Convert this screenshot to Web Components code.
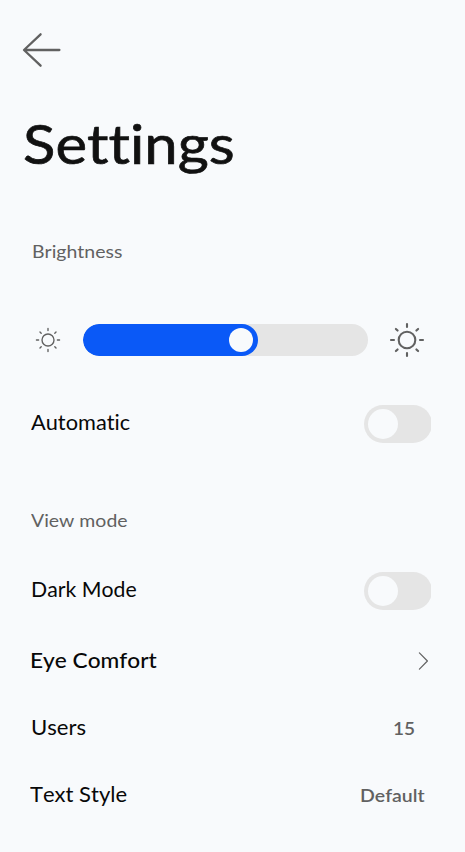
<!DOCTYPE html>
<html lang="en">
<head>
<meta charset="utf-8">
<title>Settings</title>
<style>
html,body{margin:0;background:#f8fafc}
</style>
</head>
<body>
<settings-page></settings-page>
<script>
const define = (name, html, setup) => {
  const t = document.createElement('template');
  t.innerHTML = html;
  customElements.define(name, class extends HTMLElement {
    connectedCallback() {
      if (this.shadowRoot) return;
      this.attachShadow({mode: 'open'}).append(t.content.cloneNode(true));
      if (setup) setup.call(this, this.shadowRoot);
    }
  });
};

// A label whose glyphs are widened to span the given width.
define('fit-label', `<style>
:host{display:block;white-space:nowrap;font-kerning:none;font-variant-ligatures:none}
span{display:block;width:max-content;transform-origin:0 50%}
</style><span><slot></slot></span>`, function () {
  const text = this.textContent, cs = getComputedStyle(this);
  const c = document.createElement('canvas').getContext('2d');
  c.font = `${cs.fontWeight} ${cs.fontSize} ${cs.fontFamily}`;
  c.fontKerning = 'none';
  const m = c.measureText(text);
  const ink = m.actualBoundingBoxRight + m.actualBoundingBoxLeft;
  const w = +this.getAttribute('span');
  const k = w / ink;
  const s = this.shadowRoot.querySelector('span');
  s.style.transform = `scaleX(${k})`;
  s.style.marginLeft = m.actualBoundingBoxLeft * k + 'px';
  this.style.width = w + 'px';
});

define('back-button', `<style>:host{display:block;height:36px}svg{display:block}</style>
<svg width="40" height="36" viewBox="0 0 40 36" fill="none" stroke="#616161" stroke-width="2.3" stroke-linecap="round" stroke-linejoin="round"><path d="M18.6 2.3 2 18 18.6 33.7M2.3 18H37.4"/></svg>`);

define('sun-icon', `<style>:host{display:block;flex:none;width:var(--size);height:var(--size)}svg{display:block}</style>
<svg width="100%" height="100%" viewBox="0 0 36 36" fill="none" stroke="#616161" stroke-linecap="round"><circle cx="18" cy="18" r="8.3"/><path d="M18 2v3M18 31v3M2 18h3M31 18h3M6.9 6.9l1.7 1.7M27.4 27.4l1.7 1.7M6.9 29.1l1.7-1.7M27.4 8.6l1.7-1.7"/></svg>`, function (r) {
  r.querySelector('svg').setAttribute('stroke-width', this.getAttribute('stroke') || '2.1');
});

define('range-slider', `<style>
:host{display:block;width:285px;height:32px;border-radius:16px;background:#e5e5e5;overflow:hidden}
.fill{box-sizing:border-box;width:175px;height:32px;border-radius:16px;background:#0a59f7;display:flex;align-items:center;justify-content:flex-end;padding-right:5px}
i{display:block;width:24px;height:24px;border-radius:50%;background:#f8fafc}
</style><div class="fill"><i></i></div>`);

define('toggle-switch', `<style>
:host{display:block;flex:none;width:67px;height:38px;overflow:hidden}
div{box-sizing:border-box;width:68px;height:38px;border-radius:19px;background:#e5e5e5;padding:4px}
i{display:block;width:30px;height:30px;border-radius:50%;background:#f8fafc}
</style><div><i></i></div>`);

define('chevron-icon', `<style>:host{display:block;width:12px;height:20px}svg{display:block}</style>
<svg width="12" height="20" viewBox="0 0 12 20" fill="none" stroke="#616161" stroke-width="1.2" stroke-linecap="round" stroke-linejoin="round"><path d="M2.4 1.9 10.4 10 2.4 18.1"/></svg>`);

define('setting-row', `<style>
:host{display:flex;align-items:center;justify-content:space-between;height:38px;box-sizing:border-box;font-size:21px;line-height:34px;color:#080808}
.label{padding-bottom:4px}
::slotted([slot=value]){font-size:18px;font-weight:600;color:#616161}
</style><div class="label"><slot></slot></div><div class="value"><slot name="value"></slot></div>`);

define('section-title', `<style>:host{display:block;height:24px;line-height:24px;font-size:18px;color:#616161}</style><slot></slot>`);

define('page-title', `<style>:host{display:block;height:64px;line-height:64px;font-size:55px;color:#111;-webkit-text-stroke:.7px #111}</style><slot></slot>`);

define('settings-page', `<style>
:host{display:flex;flex-direction:column;box-sizing:border-box;width:465px;height:852px;padding-top:32px;overflow:hidden;background:#f8fafc;font-family:Lato,"Open Sans",sans-serif}
back-button{margin-left:22px}
page-title{margin:43px 0 0 24.5px}
.bright{margin:64px 0 0 33.5px}
.slider{display:flex;align-items:center;height:36px;margin:59px 0 0 35px}
.slider range-slider{margin:0 21px}
.view{margin:65px 0 0 31px}
setting-row{margin-left:31px;margin-right:34px}
.auto{margin-top:47px}
.dark{margin-top:40px;margin-left:32px}
.eye{margin-top:33px;margin-right:36px}
.eye chevron-icon{margin-top:-3px}
.users{margin-top:29px;margin-left:32px;margin-right:50px}
.style{margin-top:29px;margin-left:30px;margin-right:40px}
.users [slot],.style [slot]{margin-top:-2px}
</style>
<back-button></back-button>
<page-title><fit-label span="207">Settings</fit-label></page-title>
<section-title class="bright"><fit-label span="89.5">Brightness</fit-label></section-title>
<div class="slider"><sun-icon style="--size:26px" stroke="1.9"></sun-icon><range-slider style="margin-left:22px"></range-slider><sun-icon style="--size:36px"></sun-icon></div>
<setting-row class="auto"><fit-label span="99.5">Automatic</fit-label><toggle-switch slot="value"></toggle-switch></setting-row>
<section-title class="view"><fit-label span="96">View mode</fit-label></section-title>
<setting-row class="dark"><fit-label span="104.5">Dark Mode</fit-label><toggle-switch slot="value"></toggle-switch></setting-row>
<setting-row class="eye"><fit-label span="126" style="font-weight:500">Eye Comfort</fit-label><chevron-icon slot="value"></chevron-icon></setting-row>
<setting-row class="users"><fit-label span="54">Users</fit-label><fit-label slot="value" span="20.5">15</fit-label></setting-row>
<setting-row class="style"><fit-label span="97">Text Style</fit-label><fit-label slot="value" span="64">Default</fit-label></setting-row>`);
</script>
</body>
</html>
